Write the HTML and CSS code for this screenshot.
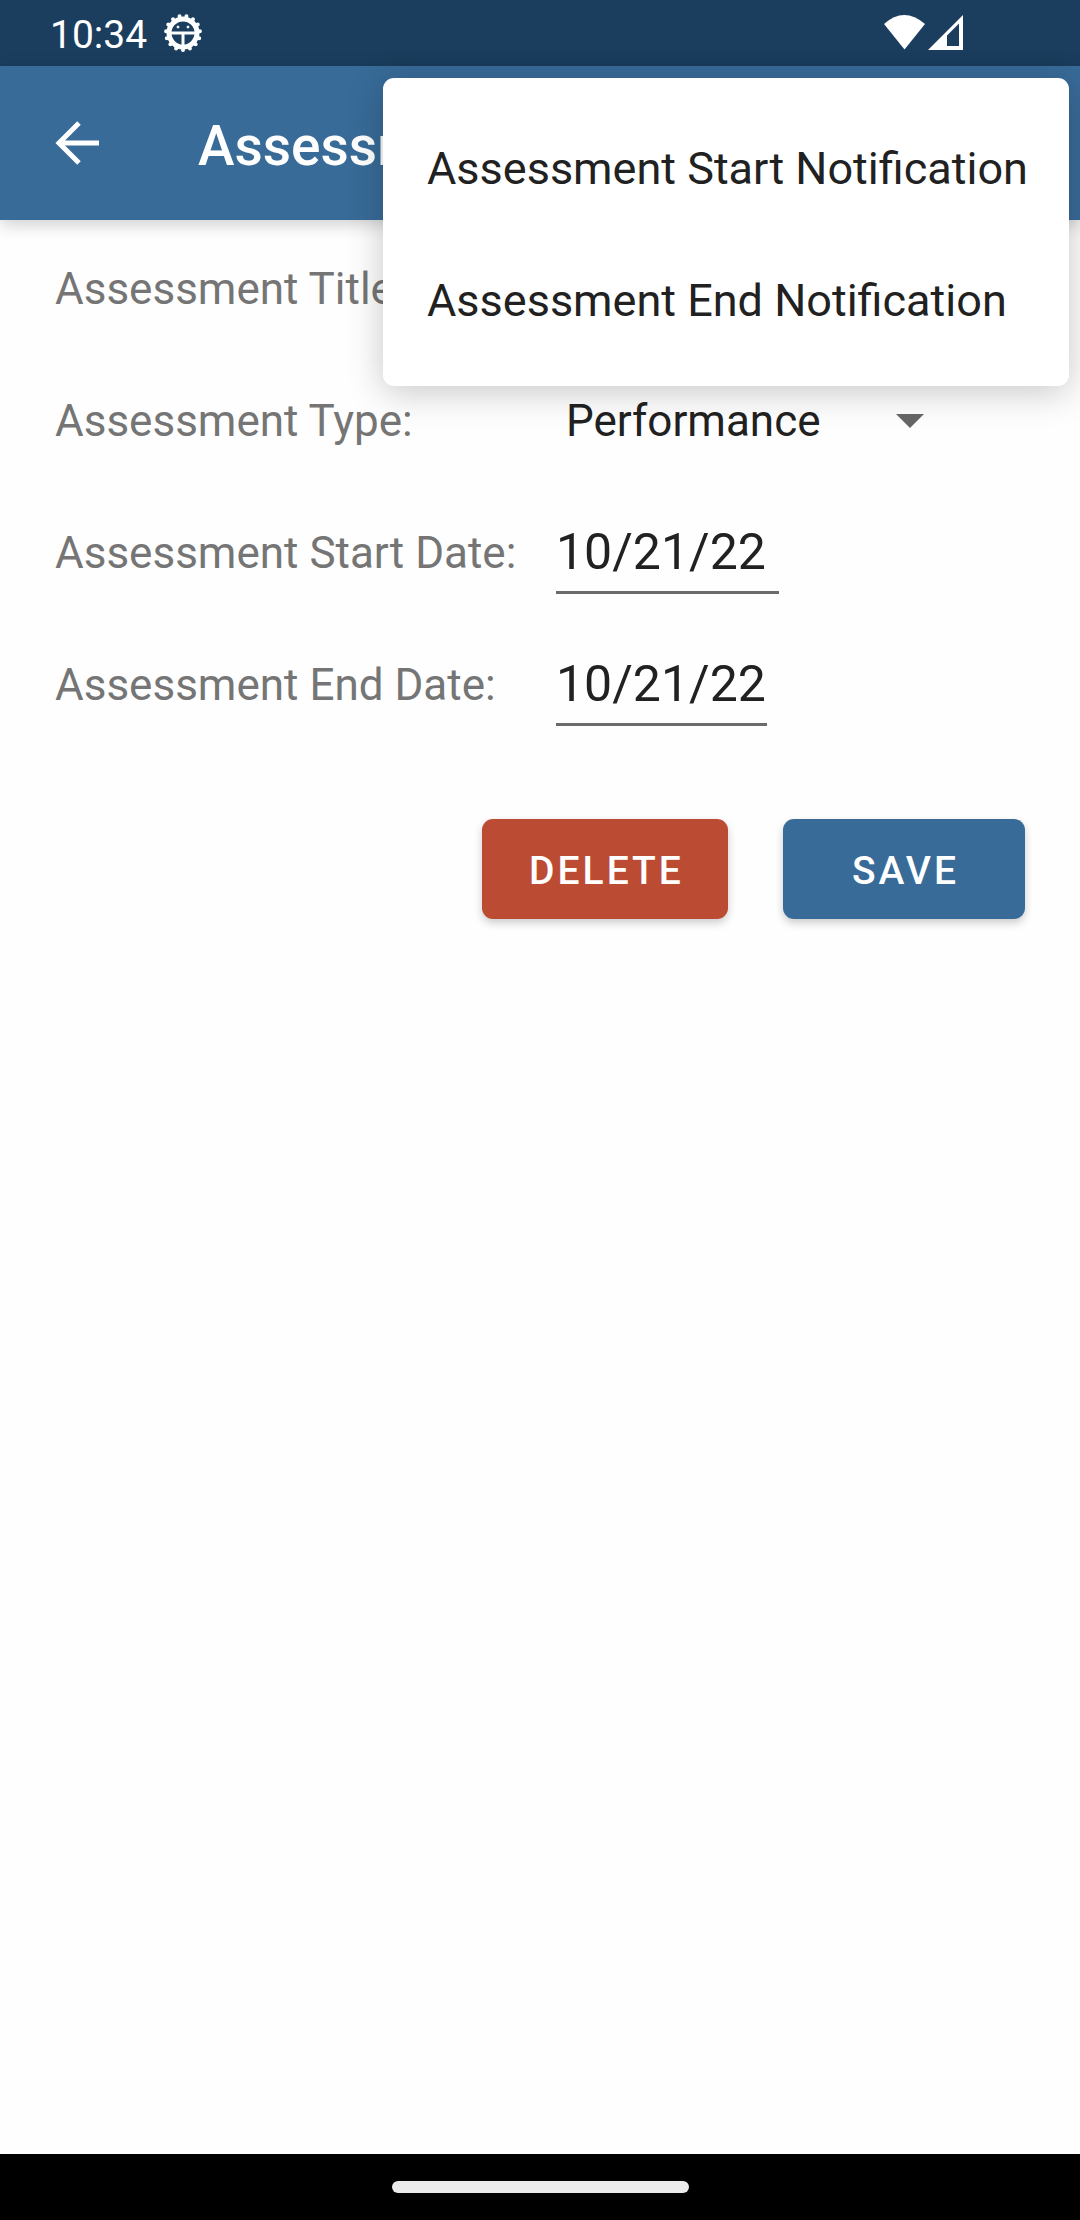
FILE: index.html
```html
<!DOCTYPE html>
<html lang="en">
<head>
<meta charset="utf-8">
<meta name="viewport" content="width=device-width, initial-scale=1">
<title>Assessment Details</title>
<link rel="stylesheet" href="styles.css">
</head>
<body>
<div class="status-bar">
  <time class="clock">10:34</time>
  <svg class="debug-icon" width="40" height="40" viewBox="0 0 40 40" fill="none" stroke="#fff" aria-hidden="true">
    <circle cx="20" cy="20" r="17" pathLength="15" stroke-width="4" stroke-linecap="round" stroke-dasharray="0 1" transform="rotate(90 20 20)"/>
    <circle cx="20" cy="20" r="14" stroke-width="5"/>
    <path d="M7 20h26M20 20v14" stroke-width="3"/>
    <circle cx="15" cy="14" r="1" fill="#fff" stroke-width="1"/>
    <circle cx="25" cy="14" r="1" fill="#fff" stroke-width="1"/>
  </svg>
  <svg class="signal-icons" width="80" height="36" viewBox="0 0 80 36" fill="#fff" aria-hidden="true">
    <path d="M0 9Q20 -9 41 9L20.500 34.500Z"/>
    <path fill-rule="evenodd" d="M44 35L79 0V35ZM63 20.500V31H75V8.500Z"/>
  </svg>
</div>
<header class="app-bar">
  <button class="back" type="button" aria-label="Back">
    <svg width="44" height="44" viewBox="0 0 44 44" fill="none" stroke="#fff" stroke-width="5" aria-hidden="true">
      <path d="M24 2L4 22L24 42M4 22H44"/>
    </svg>
  </button>
  <h1 class="title">Assessment Details</h1>
</header>
<div class="menu" role="menu">
  <button class="menu-item" type="button" role="menuitem">Assessment Start Notification</button>
  <button class="menu-item" type="button" role="menuitem">Assessment End Notification</button>
</div>
<main class="content">
  <form class="form">
    <div class="row">
      <label class="label" for="title">Assessment Title:</label>
      <input class="field field-title" id="title" type="text">
    </div>
    <div class="row">
      <label class="label" for="type">Assessment Type:</label>
      <div class="spinner">
        <select class="select" id="type">
          <option>Performance</option>
          <option>Objective</option>
        </select>
        <svg class="arrow" width="28" height="14" viewBox="0 0 28 14" fill="#666" aria-hidden="true"><path d="M0 0H28L14 14Z"/></svg>
      </div>
    </div>
    <div class="row">
      <label class="label" for="start">Assessment Start Date:</label>
      <input class="field field-start" id="start" type="text" value="10/21/22">
    </div>
    <div class="row">
      <label class="label" for="end">Assessment End Date:</label>
      <input class="field field-end" id="end" type="text" value="10/21/22">
    </div>
    <div class="actions">
      <button class="btn btn-delete" type="button">DELETE</button>
      <button class="btn btn-save" type="button">SAVE</button>
    </div>
  </form>
</main>
<footer class="nav-bar"><div class="handle"></div></footer>
</body>
</html>
```

FILE: styles.css
```css
* {
  box-sizing: border-box;
}

body {
  margin: 0;
  min-height: 100vh;
  display: flex;
  flex-direction: column;
  position: relative;
  background: #fefefe;
  color: #212121;
  font-family: Roboto, "Liberation Sans", sans-serif;
  font-size: 44px;
}

button,
input,
select {
  font: inherit;
  color: inherit;
  margin: 0;
  padding: 0;
  border: 0;
  border-radius: 0;
  background: none;
}

.status-bar {
  height: 66px;
  padding: 0 116px 0 50px;
  display: flex;
  align-items: center;
  background: #1b3e5f;
  color: #fff;
}

.clock {
  padding-top: 4px;
  font-size: 39px;
  line-height: 48px;
}

.debug-icon {
  margin-left: 16px;
}

.signal-icons {
  margin-left: auto;
}

.app-bar {
  height: 154px;
  padding: 0 55px;
  display: flex;
  align-items: center;
  gap: 99px;
  background: #386b98;
  color: #fff;
  box-shadow: 0 4px 16px rgba(0, 0, 0, 0.2);
}

.back {
  display: flex;
}

.title {
  margin: 0;
  padding-top: 6px;
  font-size: 55px;
  font-weight: 500;
  line-height: 64px;
  white-space: nowrap;
}

.menu {
  position: absolute;
  top: 78px;
  right: 11px;
  z-index: 2;
  width: 686px;
  padding: 22px 0;
  display: flex;
  flex-direction: column;
  background: #fff;
  border-radius: 11px;
  box-shadow: 0 6px 36px rgba(0, 0, 0, 0.22);
}

.menu-item {
  height: 132px;
  padding: 4px 0 0 44px;
  font-size: 45px;
  text-align: left;
  white-space: nowrap;
}

.content {
  flex: 1;
}

.form {
  padding: 3px 55px 0;
}

.row {
  height: 132px;
  display: grid;
  grid-template-columns: 501px 1fr;
  align-items: center;
}

.label {
  color: #757575;
  white-space: nowrap;
}

.field {
  height: 82px;
  border-bottom: 3px solid #6b6b6b;
  font-size: 50px;
}

.field-title {
  width: 420px;
}

.field-start {
  width: 223px;
}

.field-end {
  width: 211px;
}

.spinner {
  width: 368px;
  display: grid;
  align-items: center;
}

.select,
.arrow {
  grid-area: 1 / 1;
}

.select {
  appearance: none;
  padding-left: 10px;
}

.arrow {
  justify-self: end;
  pointer-events: none;
}

.actions {
  margin-top: 68px;
  display: flex;
  justify-content: flex-end;
  gap: 55px;
}

.btn {
  height: 100px;
  padding: 4px 0 0 3px;
  border-radius: 11px;
  color: #fff;
  font-size: 39px;
  font-weight: 500;
  letter-spacing: 3px;
  box-shadow: 0 4px 8px rgba(0, 0, 0, 0.2);
}

.btn-delete {
  width: 246px;
  background: #bc4b34;
}

.btn-save {
  width: 242px;
  background: #386b98;
}

.nav-bar {
  height: 66px;
  display: flex;
  align-items: center;
  justify-content: center;
  background: #000;
}

.handle {
  width: 297px;
  height: 12px;
  border-radius: 6px;
  background: #ebebeb;
}
```
